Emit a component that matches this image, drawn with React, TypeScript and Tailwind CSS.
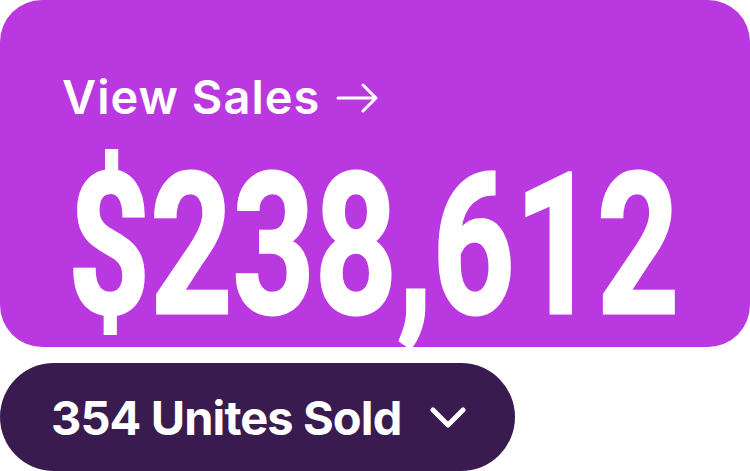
export default function App() {
  return (
    <div className="w-[750px] h-[471px] bg-white font-['Inter',sans-serif] text-white">
      {/* sales card */}
      <div className="h-[347px] rounded-[42px] bg-[#b938df] pl-[62px] pt-[73px] overflow-hidden">
        <div className="flex items-center h-[47px] text-[47px] leading-none font-semibold tracking-[1px]">
          <span>View Sales</span>
          <svg className="ml-[16px] mt-[2px]" width="42" height="30" viewBox="0 0 42 30" fill="none" stroke="white" strokeWidth="3" strokeLinecap="round" strokeLinejoin="round">
            <path d="M2 15h38M27 2l13 13-13 13" />
          </svg>
        </div>
        <div className="mt-[27px] ml-[6px] h-[197px] w-[620px] text-[197px] leading-none font-bold font-['Roboto',sans-serif]">
          <span className="inline-block origin-left scale-x-[0.728] whitespace-nowrap [-webkit-text-stroke:3px_white]">$238,612</span>
        </div>
      </div>

      {/* units pill */}
      <div className="mt-[16px] w-[515px] h-[108px] rounded-full bg-[#3a1b50] flex items-center pl-[51px]">
        <span className="text-[47px] leading-none font-bold tracking-[-0.9px]">354 Unites Sold</span>
        <svg className="ml-[29px] mt-[2px]" width="36" height="23" viewBox="0 0 36 23" fill="none" stroke="white" strokeWidth="5" strokeLinecap="round" strokeLinejoin="round">
          <path d="M3 3l15 15L33 3" />
        </svg>
      </div>
    </div>
  );
}
